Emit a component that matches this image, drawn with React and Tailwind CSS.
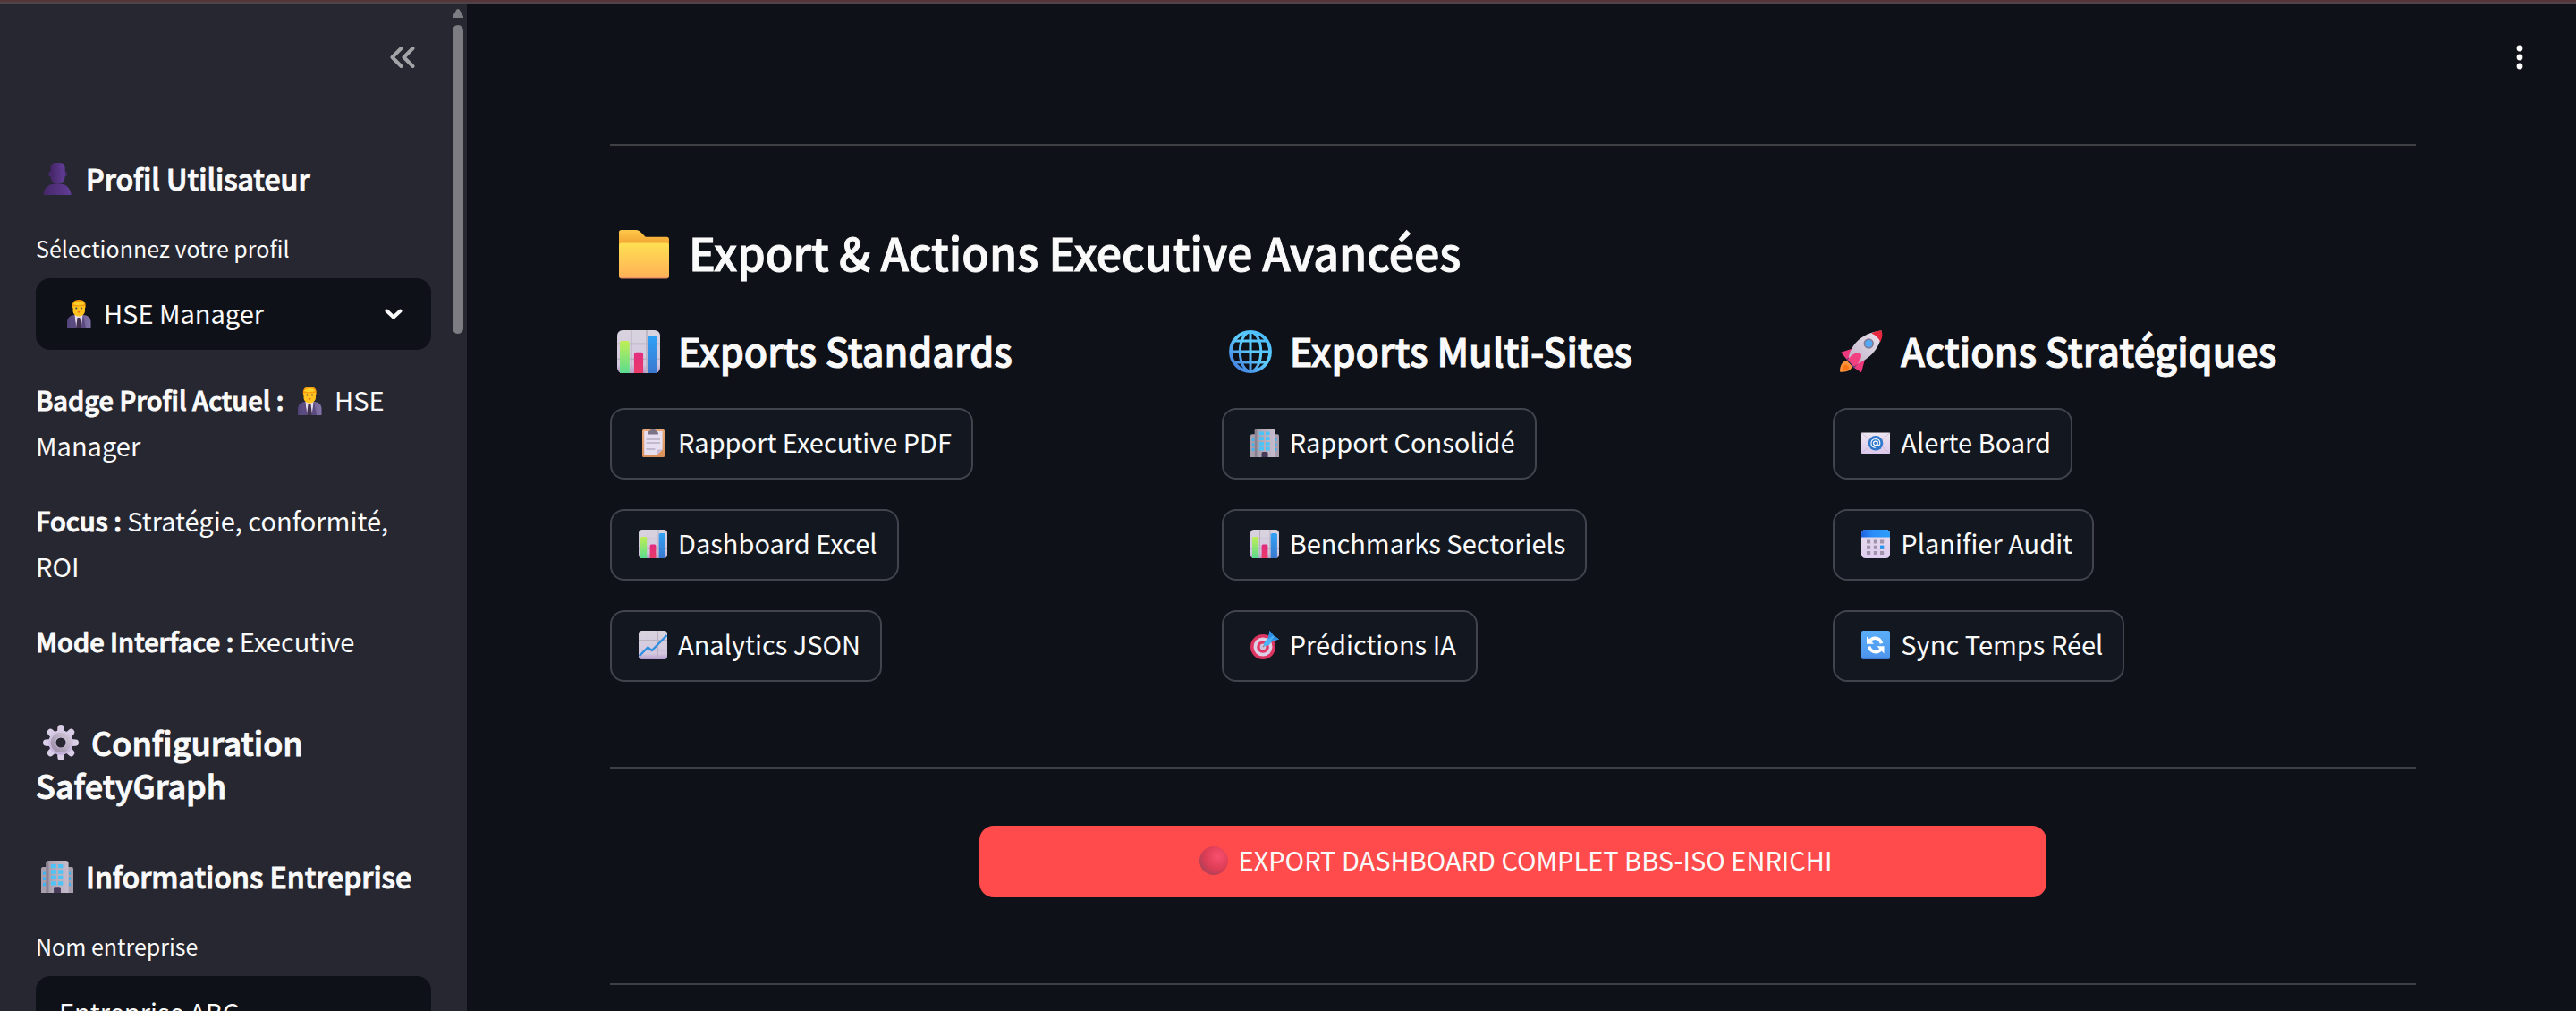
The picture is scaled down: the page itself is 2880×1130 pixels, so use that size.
import React from "react";

const glyphs = {
  bust: (
    <>
      <path d="M2 32c1-7 5-11 11-11h6c6 0 10 4 11 11z" fill="url(#g-bust)" />
      <ellipse cx="8.9" cy="11" rx="1.5" ry="2.4" fill="#4a2a75" />
      <ellipse cx="24.2" cy="11" rx="1.5" ry="2.4" fill="#4a2a75" />
      <path d="M9.300 4c.8-3 2.500-4 5-4h4.600c2.800 0 4.400 1.400 4.800 4v9c0 5-3 8-7.100 8s-7.300-3-7.300-8z" fill="url(#g-bust)" />
      <path d="M17 4h6v-1.500C21 1.500 18 2 17 4z" fill="#6b42a3" opacity=".7" />
    </>
  ),
  manager: (
    <>
      <path d="M3 32V25c0-5 4-8 8-8h10c5 0 8.500 3 8.500 8v7z" fill="url(#g-suit)" />
      <path d="M11.500 16.500h9L19 32h-6z" fill="#e4dcec" />
      <path d="M14.500 20h3l1.500 12h-6z" fill="#40324f" />
      <path d="M11 17l2.500 15H9zM21 17l-2.500 15H24z" fill="#5a4a80" />
      <path d="M9 9c-1-5 1-9 7-9s8.500 3 7.500 9z" fill="#f59a0b" />
      <path d="M9.500 7c4 .5 9 .5 13.500-.5V12c0 4-3 6.500-6.800 6.500S9.500 16 9.500 12z" fill="#ffc21f" />
      <path d="M9.500 5C12 1 21 1 22.500 5c-3 1.500-10 1.500-13 0z" fill="#ffd02b" />
      <circle cx="13.300" cy="9.500" r="1" fill="#33405a" />
      <circle cx="19" cy="9.500" r="1" fill="#33405a" />
      <path d="M14.500 13.800q1.600-1 3.200 0-1.600 1.400-3.200 0z" fill="#e3331f" />
    </>
  ),
  gear: (
    <>
      {[0, 45, 90, 135, 180, 225, 270, 315].map((a) => (
        <path key={a} d="M12.600 9l.5-6.500Q13.400 0 16 0t2.900 2.500L19.400 9z" fill="url(#g-gear)" transform={`rotate(${a} 16 16)`} />
      ))}
      <circle cx="16" cy="16" r="7.700" fill="none" stroke="url(#g-gear)" strokeWidth="6.500" />
      <circle cx="16" cy="16" r="7" fill="none" stroke="url(#g-gearring)" strokeWidth="4" />
    </>
  ),
  building: (
    <>
      <path d="M0 32V8q0-1.800 1.800-1.800H8V32zM24 6.200h6.200Q32 6.200 32 8v24h-8z" fill="#a79fae" />
      <path d="M1.800 11h2.800v3H1.800zm0 5.500h2.800v3H1.800zm0 5.500h2.800v3H1.800zM27.400 11h2v3h-2zm0 5.500h2v3h-2zm0 5.500h2v3h-2z" fill="#3fb4f0" />
      <path d="M4.800 32V2.500Q4.800 0 7.500 0h17Q27.200 0 27.200 2.500V32z" fill="url(#g-build)" />
      <path d="M4.800 32V2.500Q4.800 0 7.500 0v32z" fill="#8b8391" />
      {[3.5, 9.2, 14.9, 20.6].map((y) => (
        <path key={y} d={`M9.800 ${y}h5.200v3.800H9.800zM17 ${y}h4.600v3.800H17z`} fill="#4cc4fa" />
      ))}
      <path d="M12.500 32v-4.500q0-1.500 1.500-1.500h4q1.500 0 1.500 1.500V32z" fill="#4a3a59" />
    </>
  ),
  folder: (
    <>
      <path d="M0 2Q0 .5 1.500.5H11q1.500 0 2.500 1L17 5h13.500Q32 5 32 6.500V20H0z" fill="url(#g-folderback)" />
      <path d="M0 10q0-1.200 1.500-1.200h29Q32 8.800 32 10v20q0 1.600-1.500 1.600h-29Q0 31.600 0 30z" fill="url(#g-folder)" />
      <path d="M.5 31q.5.600 1 .6h29q.6 0 1-.6z" fill="#f08a70" />
    </>
  ),
  bars: (
    <>
      <rect width="32" height="32" rx="4" fill="url(#g-paper)" />
      <path d="M10.500 0v32M22 0v32M0 10.200h32M0 21.500h32" stroke="#b9b2c1" strokeWidth="1.100" />
      <path d="M2 32V9.500Q2 8 3.500 8h4.200Q9.200 8 9.200 9.500V32z" fill="url(#g-green)" />
      <path d="M12.600 32V18q0-1.500 1.500-1.500h3.800q1.500 0 1.500 1.500v14z" fill="url(#g-pink)" />
      <path d="M22.700 32V5.500Q22.700 4 24.200 4h4.200q1.500 0 1.500 1.500V32z" fill="url(#g-blue)" />
    </>
  ),
  trend: (
    <>
      <rect width="32" height="32" rx="3.500" fill="url(#g-paper)" />
      <path d="M10.500 0v32M21.500 0v32M0 10.500h32M0 21.800h32" stroke="#b9b2c1" strokeWidth="1.100" />
      <path d="M.8 28.200l9.500-9.700 4.500 3.500L31.500 5" fill="none" stroke="#2f8fe0" strokeWidth="2.300" />
    </>
  ),
  globe: (
    <>
      <circle cx="16" cy="16" r="14.700" fill="none" stroke="url(#g-globe)" strokeWidth="2.500" />
      <ellipse cx="16" cy="16" rx="7.800" ry="14.700" fill="none" stroke="url(#g-globe)" strokeWidth="2" />
      <path d="M15 1h2v30h-2zM1 15h30v2H1zM4 7h24v2H4zM4 23h24v2H4z" fill="url(#g-globe)" />
    </>
  ),
  rocket: (
    <>
      <path d="M5 22.500c-3.500 1-5 4-5 8.500 4.500.5 8-.6 9.300-4z" fill="#fb923c" />
      <path d="M4.500 25.500c-2 .8-2.800 3-2.800 4.800 2.500 0 4.500-.8 5.300-2.600z" fill="#f97316" />
      <path d="M10 13.500L.8 16.500l4.700 5.800 5-2.300zM19 20.500L16 31.500l-7-4.500 3-5z" fill="#ec3a7c" />
      <path d="M4.800 21.500l2.600-1.400 5.300 5.800-2.200 2.500z" fill="#4b3a78" />
      <path d="M6.500 20.500C8 11 16 2 31 .3 31.800 12 22 22 11.500 25.500z" fill="url(#g-rocket)" />
      <path d="M23.500 2.300C26 1 28.500.3 31 .3q1.500 4-.8 8.400-2-4.400-6.700-6.400z" fill="#e8283f" />
      <path d="M15.600 17.500c1.500 3-2 8-5 9.500l-5-5c3-3.500 7-6.500 10-4.500z" fill="#f24080" />
      <circle cx="21.500" cy="10" r="3.800" fill="#7f7a92" />
      <circle cx="21.500" cy="10" r="2.700" fill="#55a8f5" />
    </>
  ),
  clipboard: (
    <>
      <rect x="4" y="1" width="25" height="31" rx="1.500" fill="url(#g-board)" />
      <path d="M6.200 3h20.400v20.500L20 30H6.200z" fill="#e7dff0" />
      <path d="M20 30v-5q0-1.500 1.500-1.500h5z" fill="#c5b8d3" />
      <path d="M10 6.500q0-3.500 3-4.500 1-2 3-2t3 2q3 1 3 4.500z" fill="#7c7485" />
      <path d="M8.500 12h15.500M8.500 16h15.500M8.500 19.500h15.500M8.500 23h10" stroke="#9d93ab" strokeWidth="1" />
    </>
  ),
  target: (
    <>
      <circle cx="14" cy="18" r="14" fill="#dc3561" />
      <circle cx="14" cy="18" r="10.500" fill="#dccfe6" />
      <circle cx="14" cy="18" r="6.800" fill="#e53765" />
      <circle cx="14" cy="18" r="3.400" fill="#cfc3dc" />
      <path d="M14 18L22 10" stroke="#8f8799" strokeWidth="1.600" />
      <path d="M15 16.500q-.5-2.500 1-4l4-5L21.500 0l4.300 5.200L32 9.500l-7.500 2.500-4 4q-2.500 1.800-5.500.5z" fill="#4cb2f8" />
      <path d="M21.500 0l4.300 5.200L20 9.500zM27 6l5 3.500-9 1.500z" fill="#2b8de4" />
    </>
  ),
  email: (
    <>
      <rect y="4.500" width="32" height="23.500" rx="1" fill="url(#g-mail)" />
      <path d="M.5 5L13 16 .5 27.500M31.500 5L19 16l12.500 11.500" fill="none" stroke="#cdbcd8" strokeWidth="1" />
      <circle cx="16" cy="16.300" r="8.300" fill="#2f78cc" />
      <circle cx="15.800" cy="16.300" r="2.200" fill="none" stroke="#fff" strokeWidth="1.200" />
      <path d="M18 13.900v3.300q0 1.600 1.400 1.500 1.500-.2 1.400-3-.3-4-4.800-4.200-4.900.2-5.100 4.900.2 4.700 5.200 4.800" fill="none" stroke="#fff" strokeWidth="1.100" />
    </>
  ),
  calendar: (
    <>
      <rect width="32" height="32" rx="4.500" fill="url(#g-cal)" />
      <path d="M0 8.500V4.500Q0 0 4.500 0h23Q32 0 32 4.500v4z" fill="url(#g-caltop)" />
      {[11.5, 17.7, 24].map((y) => (
        <path key={y} d={`M6 ${y}h4.200v4H6zM13.800 ${y}h4.200v4h-4.200zM21 ${y}h4.200v4H21z`} fill="#9f94ac" />
      ))}
      <path d="M21 17.700h4.200v4H21z" fill="#2196f3" />
    </>
  ),
  sync: (
    <>
      <rect width="32" height="32" rx="2" fill="url(#g-sync)" />
      <path d="M8.500 12.500Q11.500 8 16 8.300q5 .4 6.500 6" fill="none" stroke="#fff" strokeWidth="3.600" />
      <path d="M6 6.500v8.300h8z" fill="#fff" />
      <path d="M23 19.500q-3 4.500-7.500 4.200-5-.4-7-6" fill="none" stroke="#fff" strokeWidth="3.600" />
      <path d="M25.500 25.500v-8.300h-8z" fill="#fff" />
    </>
  ),
  ball: <circle cx="16" cy="16" r="16" fill="url(#g-ball)" />,
};

const stops = (list) => list.map(([o, c]) => <stop key={o} offset={o} stopColor={c} />);

function Gradients() {
  const vertical = { x1: 0, y1: 0, x2: 0, y2: 1 };
  const slanted = { x1: 1, y1: 0, x2: 0, y2: 1 };
  return (
    <svg aria-hidden="true" className="absolute size-0">
      <defs>
        <linearGradient id="g-bust">{stops([[0, "#452667"], [1, "#613d96"]])}</linearGradient>
        <linearGradient id="g-suit">{stops([[0, "#514278"], [1, "#8273a8"]])}</linearGradient>
        <linearGradient id="g-gear" gradientUnits="userSpaceOnUse" x1="0" y1="0" x2="0" y2="32">{stops([[0, "#dcd2e8"], [1, "#bda9d8"]])}</linearGradient>
        <linearGradient id="g-gearring" {...slanted}>{stops([[0, "#cfc6d6"], [1, "#9d8fa8"]])}</linearGradient>
        <linearGradient id="g-build">{stops([[0, "#a49bab"], [0.5, "#b7aebd"], [1, "#c6bccd"]])}</linearGradient>
        <linearGradient id="g-folderback" {...vertical}>{stops([[0, "#ffc94a"], [0.5, "#f0a030"]])}</linearGradient>
        <linearGradient id="g-folder" {...vertical}>{stops([[0, "#ffe052"], [1, "#ffb057"]])}</linearGradient>
        <linearGradient id="g-paper" {...vertical}>{stops([[0, "#d9d3de"], [0.8, "#d3c8e0"], [1, "#b49ccb"]])}</linearGradient>
        <linearGradient id="g-green" {...vertical}>{stops([[0, "#c0ee55"], [1, "#5bdc8f"]])}</linearGradient>
        <linearGradient id="g-pink" {...vertical}>{stops([[0, "#e22b80"], [1, "#ea3b68"]])}</linearGradient>
        <linearGradient id="g-blue" {...vertical}>{stops([[0, "#30a2f6"], [1, "#3a78cf"]])}</linearGradient>
        <linearGradient id="g-globe" gradientUnits="userSpaceOnUse" x1="32" y1="0" x2="4" y2="32">{stops([[0, "#45b5fb"], [0.5, "#5ecdfd"], [1, "#3f74dd"]])}</linearGradient>
        <linearGradient id="g-rocket" {...slanted}>{stops([[0, "#ece4f0"], [1, "#bdb2c6"]])}</linearGradient>
        <linearGradient id="g-board" {...vertical}>{stops([[0, "#e9a878"], [1, "#d98f5a"]])}</linearGradient>
        <linearGradient id="g-mail" {...vertical}>{stops([[0, "#ede6f0"], [1, "#dcc8ec"]])}</linearGradient>
        <linearGradient id="g-cal" {...vertical}>{stops([[0, "#e6dcec"], [1, "#dfcdf0"]])}</linearGradient>
        <linearGradient id="g-caltop">{stops([[0, "#1f62e0"], [0.4, "#2c8ef8"], [1, "#2b9dfa"]])}</linearGradient>
        <linearGradient id="g-sync" {...vertical}>{stops([[0, "#5aaef8"], [0.9, "#4f97ee"], [1, "#3b78d6"]])}</linearGradient>
        <radialGradient id="g-ball" cx=".65" cy=".35" r=".75">{stops([[0, "#f8506f"], [0.6, "#dd3d55"], [1, "#a84158"]])}</radialGradient>
      </defs>
    </svg>
  );
}

const glyphSizes = {
  body: "size-8 align-[-5px] ml-1.5 mr-3",
  h3: "size-9 align-[-5px] ml-1.5 mr-3.5",
  h2: "size-10 align-[-5px] ml-2 mr-3.5",
  column: "size-12 align-[-7px] ml-2 mr-5",
  title: "size-14 align-[-9px] ml-2.5 mr-[22px]",
};

function Glyph({ name, size = "body" }) {
  return (
    <svg viewBox="0 0 32 32" aria-hidden="true" className={`inline-block ${glyphSizes[size]}`}>
      {glyphs[name]}
    </svg>
  );
}

/* Semibold look: the medium face with a one-pixel outline. */
const semibold = "font-medium [-webkit-text-stroke:1px_currentColor]";

const columns = [
  {
    icon: "bars",
    title: "Exports Standards",
    actions: [
      ["clipboard", "Rapport Executive PDF"],
      ["bars", "Dashboard Excel"],
      ["trend", "Analytics JSON"],
    ],
  },
  {
    icon: "globe",
    title: "Exports Multi-Sites",
    actions: [
      ["building", "Rapport Consolidé"],
      ["bars", "Benchmarks Sectoriels"],
      ["target", "Prédictions IA"],
    ],
  },
  {
    icon: "rocket",
    title: "Actions Stratégiques",
    actions: [
      ["email", "Alerte Board"],
      ["calendar", "Planifier Audit"],
      ["sync", "Sync Temps Réel"],
    ],
  },
];

function Sidebar() {
  return (
    <aside className="flex w-[522px] shrink-0 bg-[#262730]">
      <div className="min-w-0 flex-1 pl-10 pr-6">
        <div className="flex h-[120px] items-center justify-end pr-[18px]">
          <button type="button" aria-label="Réduire la barre latérale">
            <svg viewBox="0 0 28 24" className="h-6 w-7" fill="none" stroke="#a3a4a8" strokeWidth="4" strokeLinecap="round" strokeLinejoin="round">
              <path d="M12.500 2L2.500 12l10 10M25.500 2l-10 10 10 10" />
            </svg>
          </button>
        </div>

        <h3 className={`mt-[53px] text-[32px] leading-11 ${semibold}`}>
          <Glyph name="bust" size="h3" />Profil Utilisateur
        </h3>
        <label htmlFor="profil" className="mt-9 block text-[25px] leading-10">
          Sélectionnez votre profil
        </label>
        <div className="relative mt-3.5">
          <select id="profil" className="h-20 w-full appearance-none rounded-2xl bg-[#0e1117] pb-0.5 pl-[76px] pr-20 text-[29px]">
            <option>HSE Manager</option>
          </select>
          <span className="pointer-events-none absolute top-6 left-[26px] flex">
            <Glyph name="manager" />
          </span>
          <svg viewBox="0 0 20 12" className="pointer-events-none absolute top-[34px] right-8 h-3 w-5" fill="none" stroke="#fafafa" strokeWidth="4" strokeLinecap="round" strokeLinejoin="round">
            <path d="M2.500 2.500L10 9.500l7.500-7" />
          </svg>
        </div>

        <div className="mt-[30px] flex flex-col gap-[33px] text-[29px] leading-[51px]">
          <p>
            <strong className={semibold}>Badge Profil Actuel :</strong> <Glyph name="manager" />HSE Manager
          </p>
          <p>
            <strong className={semibold}>Focus :</strong> Stratégie, conformité, ROI
          </p>
          <p>
            <strong className={semibold}>Mode Interface :</strong> Executive
          </p>
        </div>

        <h2 className={`mt-[63px] text-4xl/12 ${semibold}`}>
          <Glyph name="gear" size="h2" />Configuration SafetyGraph
        </h2>
        <h3 className={`mt-14 text-[32px] leading-11 ${semibold}`}>
          <Glyph name="building" size="h3" />Informations Entreprise
        </h3>
        <label htmlFor="entreprise" className="mt-9 block text-[25px] leading-10">
          Nom entreprise
        </label>
        <input id="entreprise" type="text" defaultValue="Entreprise ABC" className="mt-3.5 h-20 w-full rounded-2xl bg-[#0e1117] px-[26px] pb-0.5 text-[29px]" />
      </div>
      <div className="flex w-4 flex-col items-start pt-1.5">
        <svg viewBox="0 0 12 10" className="h-2.5 w-3" fill="#7c7c82">
          <path d="M6 0q1 0 1.800 1L12 8.500V10H0V8.500L4.200 1Q5 0 6 0z" />
        </svg>
        <div className="mt-2 h-[345px] w-3 rounded-full bg-[#7c7c82]" />
      </div>
    </aside>
  );
}

export default function App() {
  return (
    <div className="flex h-screen flex-col overflow-hidden bg-[#0e1117] font-['Noto_Sans_CJK_JP','Noto_Sans',sans-serif] text-[#fafafa]">
      <Gradients />
      <div className="h-1 shrink-0 border-b-2 border-[#4f4549] bg-[#55343a]" />
      <div className="flex min-h-0 flex-1">
        <Sidebar />
        <main className="min-w-0 flex-1">
          <header className="flex h-[120px] items-center justify-end pr-[53px]">
            <button type="button" aria-label="Menu principal">
              <svg viewBox="0 0 20 28" className="h-7 w-5" fill="#fff">
                <circle cx="10" cy="4" r="3.400" />
                <circle cx="10" cy="14" r="3.400" />
                <circle cx="10" cy="24" r="3.400" />
              </svg>
            </button>
          </header>
          <div className="pr-[179px] pl-40">
            <hr className="mt-[37px] border-t-2 border-[#3e4044]" />
            <h1 className={`mt-[84px] text-[50px] leading-[68px] ${semibold}`}>
              <Glyph name="folder" size="title" />Export &amp; Actions Executive Avancées
            </h1>
            <div className="mt-[47px] grid grid-cols-3 gap-8">
              {columns.map((column) => (
                <section key={column.title}>
                  <h2 className={`text-[43px] leading-[58px] ${semibold}`}>
                    <Glyph name={column.icon} size="column" />{column.title}
                  </h2>
                  <div className="mt-9 flex flex-col items-start gap-[33px]">
                    {column.actions.map(([icon, label]) => (
                      <button key={label} type="button" className="h-20 rounded-2xl border-2 border-[#41444c] bg-[#131720] pr-[22px] pb-[7px] pl-6 text-[29px] leading-10 whitespace-nowrap">
                        <Glyph name={icon} />{label}
                      </button>
                    ))}
                  </div>
                </section>
              ))}
            </div>
            <hr className="mt-[95px] border-t-2 border-[#3e4044]" />
            <div className="mt-16 grid grid-cols-[1fr_3fr_1fr] gap-4">
              <button type="button" className="col-start-2 h-20 rounded-2xl bg-[#ff4b4b] px-6 pb-[7px] text-[29px] leading-10 whitespace-nowrap">
                <Glyph name="ball" />EXPORT DASHBOARD COMPLET BBS-ISO ENRICHI
              </button>
            </div>
            <hr className="mt-24 border-t-2 border-[#3e4044]" />
          </div>
        </main>
      </div>
    </div>
  );
}
